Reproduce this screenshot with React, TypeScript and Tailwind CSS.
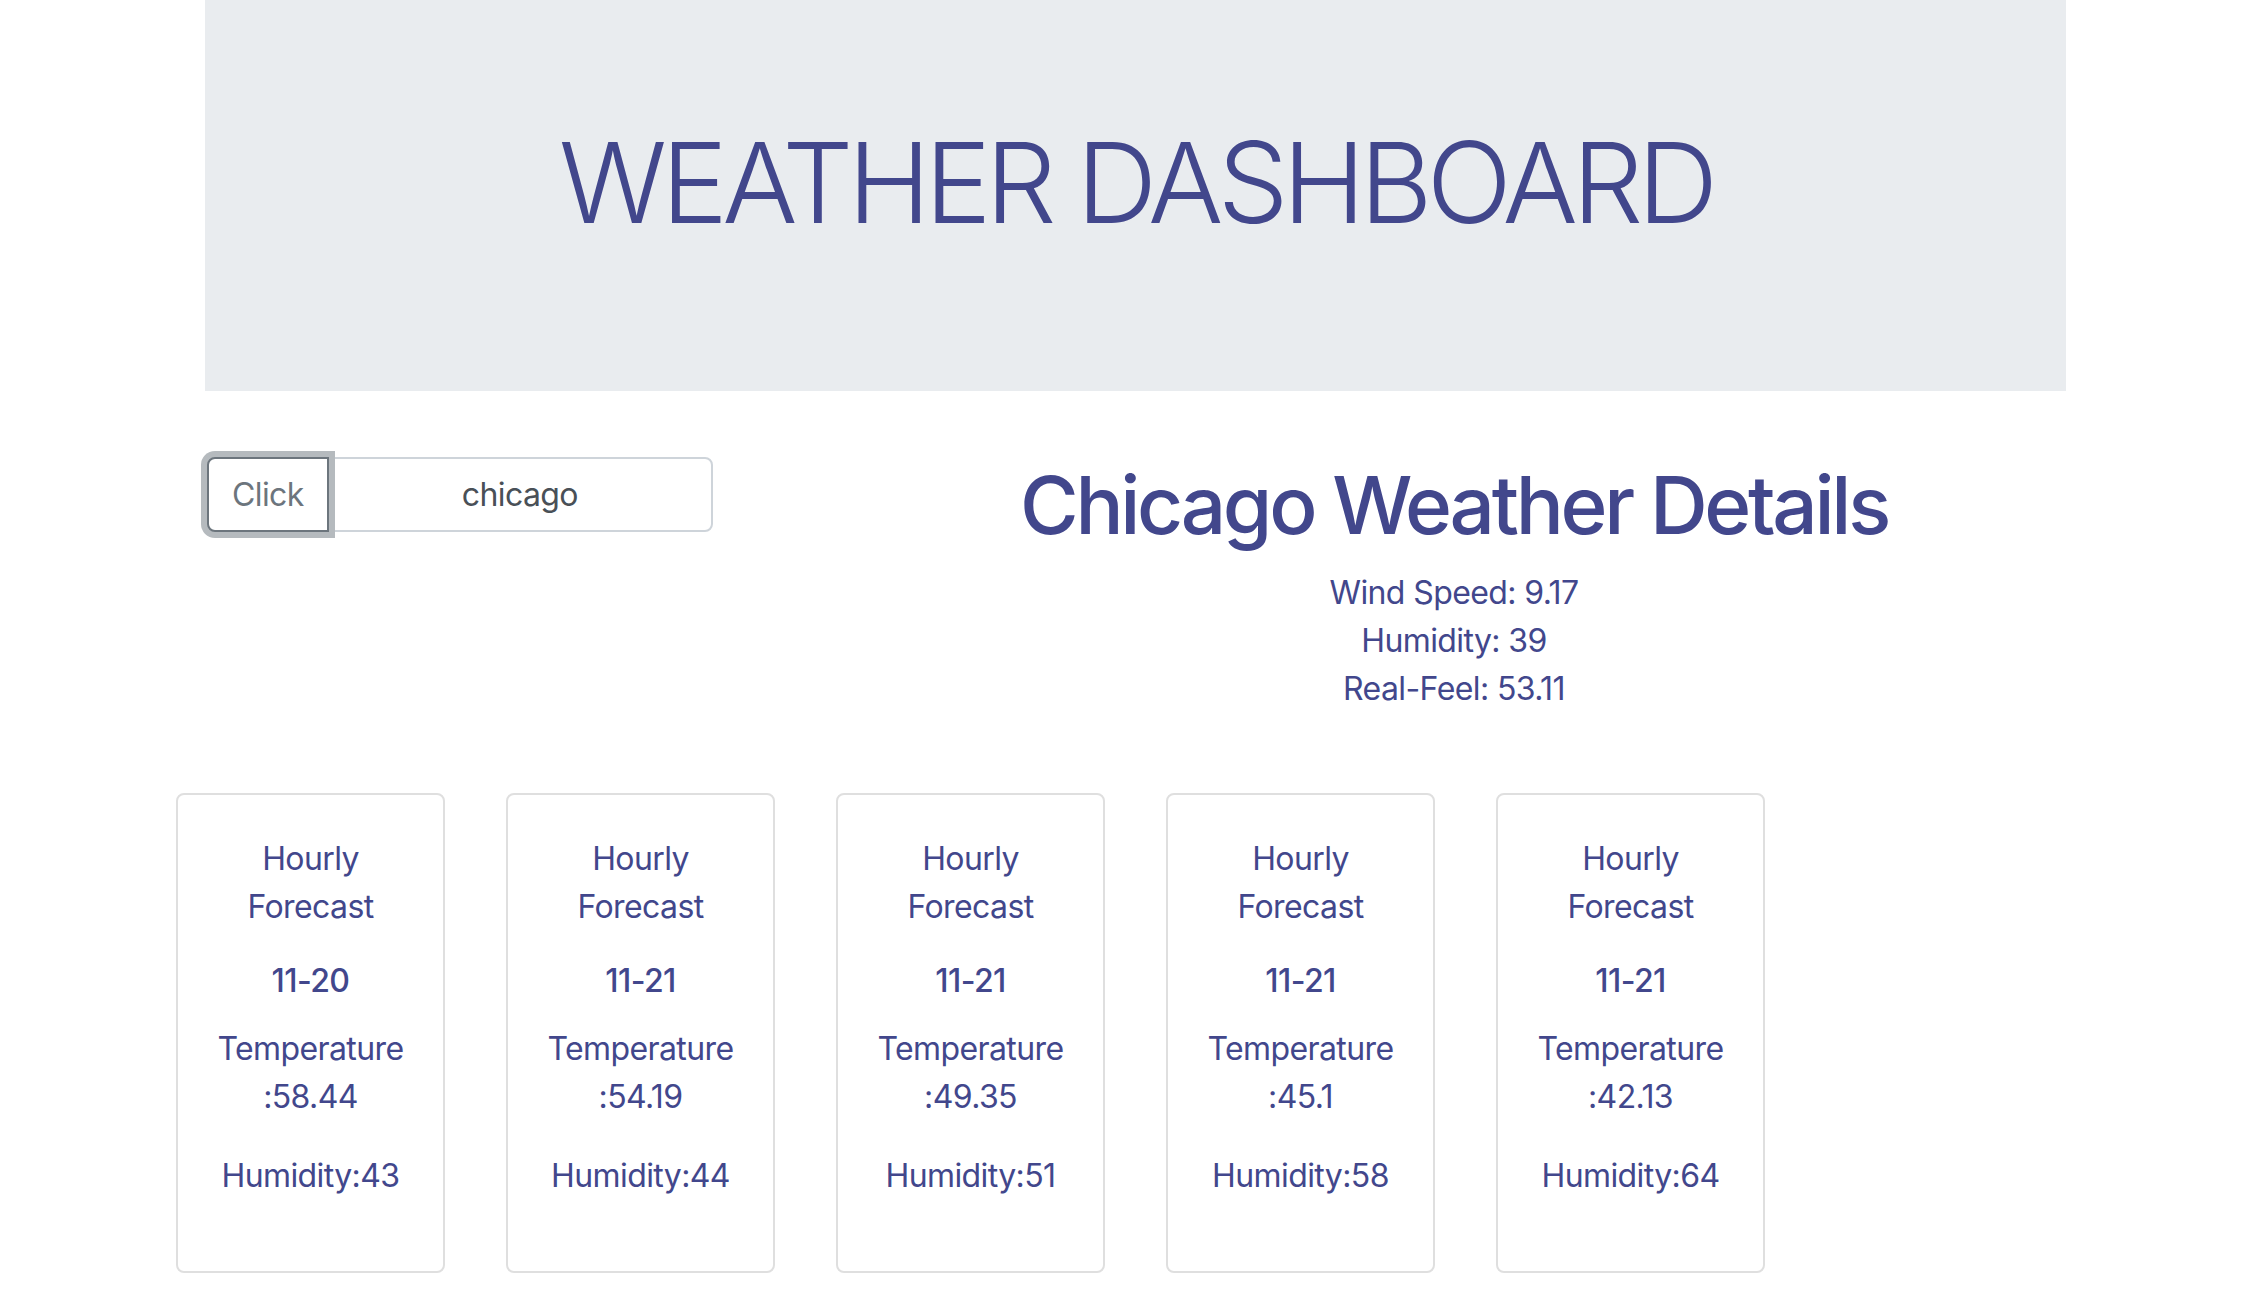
import React from 'react'

const forecasts = [
  { date: '11-20', temp: '58.44', humidity: '43' },
  { date: '11-21', temp: '54.19', humidity: '44' },
  { date: '11-21', temp: '49.35', humidity: '51' },
  { date: '11-21', temp: '45.1', humidity: '58' },
  { date: '11-21', temp: '42.13', humidity: '64' },
]

function ForecastCard({ date, temp, humidity }: { date: string; temp: string; humidity: string }) {
  return (
    <div className="w-[269px] h-[480px] shrink-0 border-2 border-[#dfdfdf] rounded-[8px] pt-[40px] text-center text-[32px] leading-[48px] tracking-[-0.6px]">
      <p>Hourly</p>
      <p>Forecast</p>
      <h5 className="mt-[26px] font-medium">{date}</h5>
      <p className="mt-[20px]">Temperature</p>
      <p>:{temp}</p>
      <p className="mt-[31px]">Humidity:{humidity}</p>
    </div>
  )
}

export default function App() {
  return (
    <div className="min-h-screen bg-white text-[#42478c] font-['Inter','Noto_Sans',sans-serif]">
      <div className="ml-[205px] w-[1861px]">
        {/* Jumbotron */}
        <header className="h-[391px] bg-[#e9ecef] pt-[115px] text-center">
          <h1 className="text-[112px] font-light leading-[134px] tracking-[-5.8px]">WEATHER DASHBOARD</h1>
        </header>

        <div className="flex mt-[66px]">
          {/* Search */}
          <div className="w-[637px] shrink-0 pl-[2px]">
            <div className="flex h-[75px] w-[506px]">
              <button className="relative z-10 rounded-l-[8px] border-2 border-[#6c757d] bg-white px-[23px] text-[32px] tracking-[-0.6px] text-[#6c757d] ring-[6px] ring-[#b5babe]">
                Click
              </button>
              <input
                readOnly
                value="chicago"
                className="-ml-[2px] min-w-0 flex-1 rounded-r-[8px] border-2 border-[#ced4da] bg-white text-center text-[32px] tracking-[-0.6px] text-[#495057] outline-none"
              />
            </div>
          </div>

          {/* Current weather */}
          <div className="flex-1 text-center">
            <h2 className="mb-[16px] text-[80px] font-medium leading-[96px] tracking-[-3.3px]">Chicago Weather Details</h2>
            <div className="text-[32px] leading-[48px] tracking-[-0.6px]">
              <p>Wind Speed: 9.17</p>
              <p>Humidity: 39</p>
              <p>Real-Feel: 53.11</p>
            </div>
          </div>
        </div>

        {/* Hourly forecast cards */}
        <div className="-ml-[29px] mt-[80px] flex gap-[61px]">
          {forecasts.map((f, i) => (
            <ForecastCard key={i} {...f} />
          ))}
        </div>
      </div>
    </div>
  )
}
